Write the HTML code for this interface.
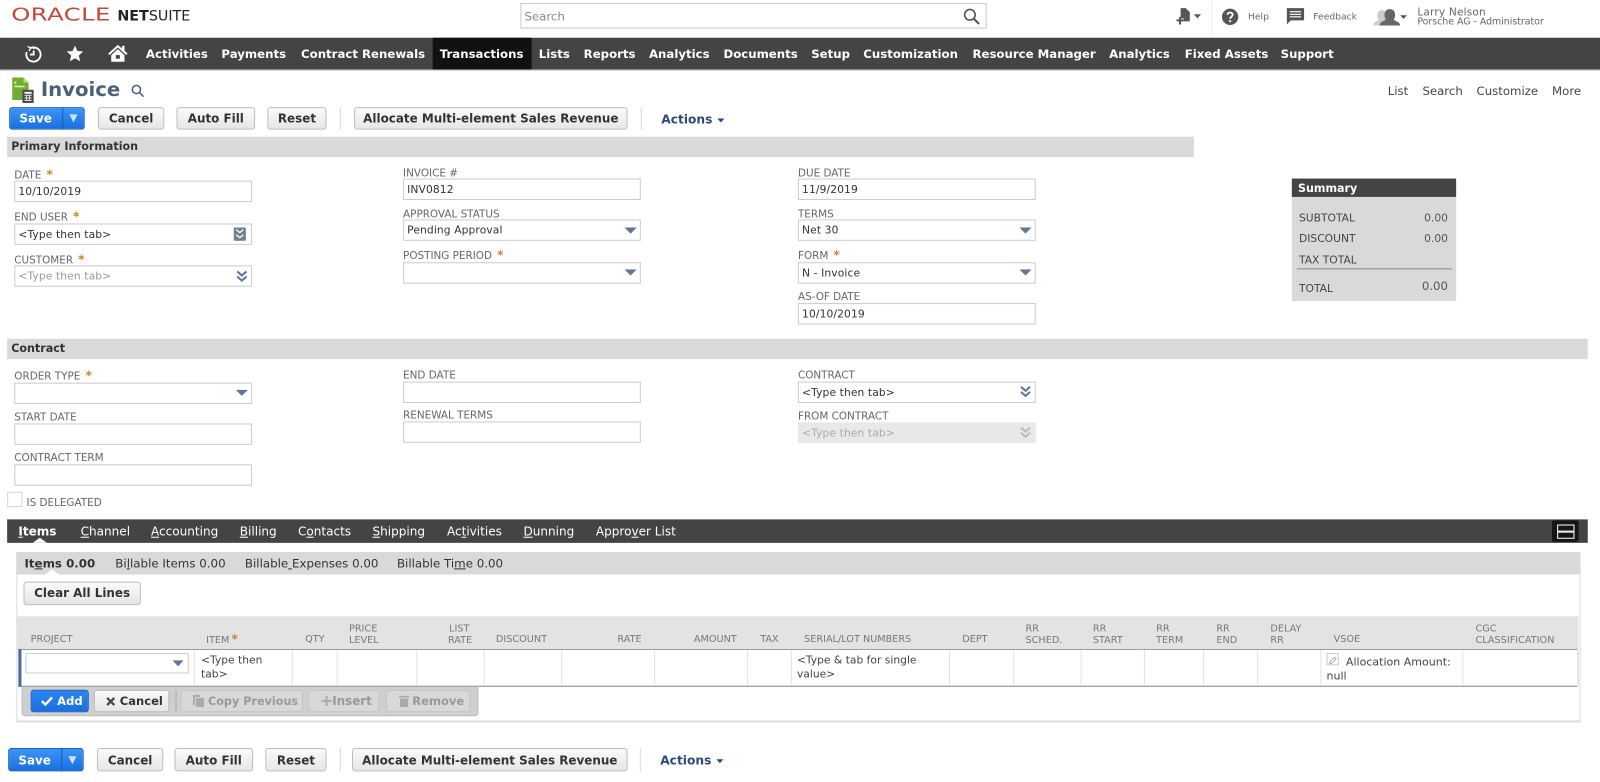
<!DOCTYPE html>
<html><head><meta charset="utf-8"><title>Invoice</title>
<style>
html,body{margin:0;padding:0;width:1600px;height:782px;overflow:hidden;background:#fff}
#w{position:absolute;left:0;top:0;width:1568px;height:766px;transform:scale(1.020408);transform-origin:0 0;font-family:"DejaVu Sans",sans-serif;font-size:10.5px;color:#333}
#w div,#w span.t,#w svg{position:absolute}
.t{white-space:nowrap;line-height:14px}
.lb{color:#666;font-size:10.2px;white-space:nowrap;line-height:14px;position:absolute}
.lb i{color:#c08a1e;font-style:normal;font-size:12px;font-weight:bold;margin-left:5px}
.in{border:1px solid #ccc;box-sizing:border-box;background:#fff;height:21px;width:233px;line-height:21px;padding-left:3px;font-size:10.5px;color:#333;letter-spacing:.1px}
.n{color:#fff;font-weight:bold;font-size:11.5px;top:46px}
.b{box-sizing:border-box;border:1px solid #bdbdbd;border-radius:3px;background:linear-gradient(#fafafa,#e6e6e6);text-align:center;font-weight:bold;font-size:11.7px;color:#333;white-space:nowrap}
.bar{background:#d9d9d9;color:#333;font-weight:bold;font-size:10.9px;line-height:20px;padding-left:4px;box-sizing:border-box;height:20px}
.tab{color:#fff;font-size:11.8px;top:514px}
.tab u{text-decoration-thickness:1px}
.st{font-size:11.6px;color:#333;top:545px}
.h{color:#777;font-size:9.5px;line-height:11px;white-space:nowrap}
.sep{width:1px;background:#e2e2e2;top:637px;height:35px}
.dis{color:#999;border-color:#c4c4c4;background:#e4e4e4}
.s{color:#444;font-size:10.5px;line-height:14px;white-space:nowrap}
</style></head><body><div id="w">

<!-- header -->
<span class="t" style="left:11px;top:6px;font-size:17px;line-height:18px;color:#c74634;letter-spacing:.3px;transform-origin:0 0;transform:scaleX(1.4)">ORACLE</span>
<span class="t" style="left:115px;top:8px;font-size:14px;line-height:17px;color:#222"><b>NET</b>SUITE</span>
<div style="left:510px;top:3px;width:457px;height:25px;border:1px solid #c9c9c9;box-sizing:border-box"></div>
<span class="t" style="left:514px;top:9px;font-size:11.5px;color:#888">Search</span>
<svg style="left:943px;top:7px" width="18" height="18" viewBox="0 0 18 18" fill="none" stroke="#555" stroke-width="1.6"><circle cx="7.5" cy="7.5" r="5.2"/><path d="M11.5 11.5l5 5" stroke-width="2"/></svg>

<svg style="left:1152px;top:7px" width="26" height="18" viewBox="0 0 26 18" fill="#555"><path d="M5 1h5l4 4v9H8v-3H5z"/><path d="M1 12h2.500V9.500h2V12H8v2H5.500v3h-2v-3H1z"/><path d="M18 7h7l-3.500 4z"/></svg>
<div style="left:1187px;top:0;width:1px;height:34px;background:#eee"></div>
<svg style="left:1197px;top:8px" width="17" height="17" viewBox="0 0 17 17"><circle cx="8.500" cy="8.500" r="8" fill="#555"/><path d="M6 6.500c0-3 5-3 5 0 0 2-2.500 2-2.500 4" fill="none" stroke="#fff" stroke-width="1.800"/><rect x="7.600" y="11.800" width="1.900" height="1.900" fill="#fff"/></svg>
<span class="t" style="left:1223px;top:10px;font-size:9px;color:#666">Help</span>
<svg style="left:1261px;top:7px" width="18" height="18" viewBox="0 0 18 18"><path d="M0 1h17v12H4l-4 4z" fill="#555"/><path d="M3 4.500h11M3 7h11M3 9.500h11" stroke="#fff" stroke-width="1.100"/></svg>
<span class="t" style="left:1287px;top:10px;font-size:9px;color:#666">Feedback</span>
<svg style="left:1345px;top:7px" width="34" height="20" viewBox="0 0 34 20"><path d="M1 18c0-4 4-4 5-6-2-2-2-9 3-9 2 0 3 1 4 2v13z" fill="#ccc"/><path d="M7 18c0-4 5-4 6-6-2-3-2-10 4-10s6 7 4 10c1 2 6 2 6 6z" fill="#666"/><path d="M28 8h7l-3.500 3.500z" fill="#555" transform="translate(-1 0)"/></svg>
<span class="t" style="left:1389px;top:5px;font-size:10.300px;color:#666;letter-spacing:.2px">Larry Nelson</span>
<span class="t" style="left:1389px;top:15px;font-size:9.200px;color:#666">Porsche AG - Administrator</span>

<!-- nav -->
<div style="left:0;top:37px;width:1568px;height:31px;background:#444;border-bottom:1px solid #bbb;box-sizing:content-box"></div>
<div style="left:424px;top:37px;width:97px;height:31px;background:#111"></div>
<svg style="left:24px;top:44px" width="18" height="18" viewBox="0 0 18 18" fill="none" stroke="#fff" stroke-width="1.800"><path d="M5.500 3.200A7 7 0 1 1 2.200 7"/><path d="M9 2v2M9 5.500V9.500H5.500"/><path d="M3 1.500l3 1.500-1.500 3" stroke-width="1.300"/></svg>
<svg style="left:65px;top:44px" width="17" height="17" viewBox="0 0 24 24" fill="#fff"><path d="M12 1l3.300 7.400 8.100.8-6.100 5.400 1.800 8L12 18.400 4.900 22.600l1.800-8L.6 9.200l8.100-.8z"/></svg>
<svg style="left:106px;top:43px" width="19" height="18" viewBox="0 0 19 18"><path d="M9.500 1L0 9.500l1.300 1.400 8.200-7.300 8.200 7.300L19 9.500l-3-2.700V2h-2.500v2.500z" fill="#fff"/><path d="M3 11l6.500-5.800L16 11v6.500H3z" fill="#fff"/><rect x="7.500" y="11" width="4" height="3.500" fill="#444"/></svg>
<span class="t n" style="left:143px">Activities</span>
<span class="t n" style="left:217px">Payments</span>
<span class="t n" style="left:295px">Contract Renewals</span>
<span class="t n" style="left:431px">Transactions</span>
<span class="t n" style="left:528px">Lists</span>
<span class="t n" style="left:572px">Reports</span>
<span class="t n" style="left:636px">Analytics</span>
<span class="t n" style="left:709px">Documents</span>
<span class="t n" style="left:795px">Setup</span>
<span class="t n" style="left:846px">Customization</span>
<span class="t n" style="left:953px">Resource Manager</span>
<span class="t n" style="left:1087px">Analytics</span>
<span class="t n" style="left:1161px">Fixed Assets</span>
<span class="t n" style="left:1255px">Support</span>

<!-- title -->
<svg style="left:11px;top:75px" width="24" height="26" viewBox="0 0 24 26"><path d="M1 1h11l5 5v17H1z" fill="#6fae2e"/><path d="M12 1l5 5h-5z" fill="#b7d98a"/><rect x="3" y="5" width="2" height="2" fill="#dff0c5"/><rect x="3" y="9" width="10" height="1.500" fill="#dff0c5"/><rect x="11" y="13" width="11" height="13" fill="#4a4a4a"/><rect x="13" y="15" width="7" height="2" fill="#eee"/><path d="M13 18.500h7M13 21h7M13 23.500h7M15 18v6M18 18v6" stroke="#ddd" stroke-width="1"/></svg>
<span class="t" style="left:40px;top:77px;font-size:19.300px;line-height:22px;font-weight:bold;color:#4d5f79">Invoice</span>
<svg style="left:128px;top:82px" width="14" height="14" viewBox="0 0 14 14" fill="none" stroke="#41608c" stroke-width="1.500"><circle cx="5.700" cy="5.700" r="4"/><path d="M8.700 8.700l4 4"/></svg>
<span class="t" style="left:1360px;top:82px;font-size:11.500px;color:#444">List</span>
<span class="t" style="left:1394px;top:82px;font-size:11.500px;color:#444">Search</span>
<span class="t" style="left:1447px;top:82px;font-size:11.500px;color:#444">Customize</span>
<span class="t" style="left:1521px;top:82px;font-size:11.500px;color:#444">More</span>

<!-- top buttons -->
<div style="left:9px;top:105px;width:74px;height:22px;border-radius:3px;background:linear-gradient(#3b95f5,#1a6fe0);border:1px solid #1a62c4;box-sizing:border-box"></div>
<div style="left:61px;top:105px;width:1px;height:22px;background:#1b5cb0"></div>
<span class="t" style="left:19px;top:109px;color:#fff;font-weight:bold;font-size:11.700px">Save</span>
<svg style="left:68px;top:112px" width="8" height="8"><path d="M0 0h8L4 8z" fill="#cfe3fb"/></svg>
<div class="b" style="left:96px;top:105px;width:65px;height:22px;line-height:20px">Cancel</div>
<div class="b" style="left:173px;top:105px;width:77px;height:22px;line-height:20px">Auto Fill</div>
<div class="b" style="left:262px;top:105px;width:58px;height:22px;line-height:20px">Reset</div>
<div style="left:333px;top:105px;width:1px;height:22px;background:#d8d8d8"></div>
<div class="b" style="left:347px;top:105px;width:268px;height:22px;line-height:20px">Allocate Multi-element Sales Revenue</div>
<div style="left:628px;top:105px;width:1px;height:22px;background:#d8d8d8"></div>
<span class="t" style="left:648px;top:110px;font-weight:bold;font-size:12px;color:#2b4a7d">Actions</span>
<svg style="left:703px;top:116px" width="7" height="5"><path d="M0 0h7L3.500 4z" fill="#2b4a7d"/></svg>

<!-- primary -->
<div class="bar" style="left:7px;top:134px;width:1163px">Primary Information</div>

<span class="lb" style="left:14px;top:164px">DATE<i>*</i></span>
<div class="in" style="left:14px;top:177px">10/10/2019</div>
<span class="lb" style="left:14px;top:205px">END USER<i>*</i></span>
<div class="in" style="left:14px;top:219px">&lt;Type then tab&gt;</div>
<svg style="left:229px;top:223px" width="12" height="13"><rect width="12" height="13" rx="1" fill="#6d7f99"/><path d="M2.500 2l3.500 3 3.500-3M2.500 7l3.500 3 3.500-3" stroke="#fff" stroke-width="1.300" fill="none"/></svg>
<span class="lb" style="left:14px;top:247px">CUSTOMER<i>*</i></span>
<div class="in" style="left:14px;top:260px;color:#999">&lt;Type then tab&gt;</div>

<span class="lb" style="left:395px;top:164px">INVOICE #</span>
<div class="in" style="left:395px;top:175px">INV0812</div>
<span class="lb" style="left:395px;top:204px">APPROVAL STATUS</span>
<div class="in" style="left:395px;top:215px">Pending Approval</div>
<span class="lb" style="left:395px;top:243px">POSTING PERIOD<i>*</i></span>
<div class="in" style="left:395px;top:257px"></div>

<span class="lb" style="left:782px;top:164px">DUE DATE</span>
<div class="in" style="left:782px;top:175px">11/9/2019</div>
<span class="lb" style="left:782px;top:204px">TERMS</span>
<div class="in" style="left:782px;top:215px">Net 30</div>
<span class="lb" style="left:782px;top:243px">FORM<i>*</i></span>
<div class="in" style="left:782px;top:257px">N - Invoice</div>
<span class="lb" style="left:782px;top:285px">AS-OF DATE</span>
<div class="in" style="left:782px;top:297px">10/10/2019</div>

<!-- summary -->
<div style="left:1266px;top:175px;width:161px;height:120px;background:#d9d9d9"></div>
<div style="left:1266px;top:175px;width:161px;height:18px;background:#444;color:#fff;font-weight:bold;font-size:10.900px;line-height:19px;text-indent:6px">Summary</div>
<span class="t s" style="left:1273px;top:207px">SUBTOTAL</span><span class="t s" style="right:149px;top:207px;font-size:10.500px;color:#555">0.00</span>
<span class="t s" style="left:1273px;top:227px">DISCOUNT</span><span class="t s" style="right:149px;top:227px;font-size:10.500px;color:#555">0.00</span>
<span class="t s" style="left:1273px;top:248px">TAX TOTAL</span>
<div style="left:1271px;top:263px;width:152px;height:1px;background:#888"></div>
<span class="t s" style="left:1273px;top:276px">TOTAL</span><span class="t s" style="right:149px;top:273px;font-size:11.500px;color:#555">0.00</span>

<!-- contract -->
<div class="bar" style="left:7px;top:332px;width:1549px">Contract</div>
<span class="lb" style="left:14px;top:361px">ORDER TYPE<i>*</i></span>
<div class="in" style="left:14px;top:375px"></div>
<span class="lb" style="left:14px;top:403px">START DATE</span>
<div class="in" style="left:14px;top:415px"></div>
<span class="lb" style="left:14px;top:443px">CONTRACT TERM</span>
<div class="in" style="left:14px;top:455px"></div>
<span class="lb" style="left:395px;top:362px">END DATE</span>
<div class="in" style="left:395px;top:374px"></div>
<span class="lb" style="left:395px;top:401px">RENEWAL TERMS</span>
<div class="in" style="left:395px;top:413px"></div>
<span class="lb" style="left:782px;top:362px">CONTRACT</span>
<div class="in" style="left:782px;top:374px">&lt;Type then tab&gt;</div>
<span class="lb" style="left:782px;top:402px">FROM CONTRACT</span>
<div class="in" style="left:782px;top:414px;height:20px;line-height:20px;background:#e8e8e8;border-color:#e8e8e8;color:#aaa">&lt;Type then tab&gt;</div>
<div style="left:7px;top:482px;width:15px;height:15px;border:1px solid #d5d5d5;box-sizing:border-box"></div>
<span class="lb" style="left:26px;top:487px">IS DELEGATED</span>

<!-- dropdown arrows -->
<svg style="left:612px;top:223px" width="12" height="7"><path d="M0 0h12L6 6z" fill="#5f7698"/></svg>
<svg style="left:612px;top:264px" width="12" height="7"><path d="M0 0h12L6 6z" fill="#5f7698"/></svg>
<svg style="left:999px;top:223px" width="12" height="7"><path d="M0 0h12L6 6z" fill="#5f7698"/></svg>
<svg style="left:999px;top:264px" width="12" height="7"><path d="M0 0h12L6 6z" fill="#5f7698"/></svg>
<svg style="left:231px;top:382px" width="12" height="7"><path d="M0 0h12L6 6z" fill="#5f7698"/></svg>
<svg style="left:231px;top:265px" width="12" height="12" fill="none" stroke="#5f7698" stroke-width="2"><path d="M1.500 1l4.500 4 4.500-4M1.500 6l4.500 4 4.500-4"/></svg>
<svg style="left:999px;top:378px" width="12" height="12" fill="none" stroke="#5f7698" stroke-width="2"><path d="M1.500 1l4.500 4 4.500-4M1.500 6l4.500 4 4.500-4"/></svg>
<svg style="left:999px;top:418px" width="12" height="12" fill="none" stroke="#bbb" stroke-width="2"><path d="M1.500 1l4.500 4 4.500-4M1.500 6l4.500 4 4.500-4"/></svg>

<!-- tabs -->
<div style="left:7px;top:509px;width:1549px;height:23px;background:#444"></div>
<span class="t tab" style="left:18px;font-weight:bold"><u>I</u>tems</span>
<svg style="left:32px;top:527px" width="14" height="5"><path d="M0 5L7 0l7 5z" fill="#fff"/></svg>
<span class="t tab" style="left:79px"><u>C</u>hannel</span>
<span class="t tab" style="left:148px"><u>A</u>ccounting</span>
<span class="t tab" style="left:235px"><u>B</u>illing</span>
<span class="t tab" style="left:292px">C<u>o</u>ntacts</span>
<span class="t tab" style="left:365px"><u>S</u>hipping</span>
<span class="t tab" style="left:438px">Ac<u>t</u>ivities</span>
<span class="t tab" style="left:513px"><u>D</u>unning</span>
<span class="t tab" style="left:584px">Appro<u>v</u>er List</span>
<div style="left:1521px;top:510px;width:26px;height:21px;background:#151515;border-radius:2px"></div>
<div style="left:1526px;top:514px;width:15px;height:5px;border:1px solid #fff"></div>
<div style="left:1526px;top:521px;width:15px;height:5px;border:1px solid #fff"></div>

<!-- panel -->
<div style="left:16px;top:541px;width:1533px;height:167px;border:1px solid #ddd;border-top:0;box-sizing:border-box;border-bottom-width:2px"></div>
<div style="left:16px;top:541px;width:1532px;height:22px;background:#d9d9d9"></div>
<span class="t st" style="left:24px;font-weight:bold">It<u>e</u>ms 0.00</span>
<span class="t st" style="left:113px">Bi<u>l</u>lable Items 0.00</span>
<span class="t st" style="left:240px">Billable<u>&nbsp;</u>Expenses 0.00</span>
<span class="t st" style="left:389px">Billable Ti<u>m</u>e 0.00</span>
<svg style="left:44px;top:558px" width="14" height="5"><path d="M0 5L7 0l7 5z" fill="#fff"/></svg>
<div class="b" style="left:23px;top:570px;width:115px;height:23px;line-height:21px">Clear All Lines</div>

<!-- table head -->
<div style="left:17px;top:604px;width:1530px;height:32px;background:#e3e3e3"></div>
<div style="left:18px;top:636px;width:1528px;height:1px;background:#9aa0a8"></div>
<div style="left:18px;top:672px;width:1528px;height:1px;background:#7f858d"></div>
<div style="left:18px;top:636px;width:3px;height:37px;background:#4d6a94"></div>
<span class="t h" style="left:30px;top:621px;line-height:11px">PROJECT</span>
<span class="t h" style="left:202px;top:621px;line-height:11px">ITEM<span style="color:#c08a1e;font-size:12px;font-weight:bold;margin-left:2px">*</span></span>
<span class="t h" style="left:299px;top:621px;line-height:11px">QTY</span>
<span class="t h" style="left:342px;top:611px;line-height:11px">PRICE<br>LEVEL</span>
<span class="t h" style="left:439px;top:611px;line-height:11px;text-align:right;width:21px">LIST<br>RATE</span>
<span class="t h" style="left:486px;top:621px;line-height:11px">DISCOUNT</span>
<span class="t h" style="left:605px;top:621px;line-height:11px">RATE</span>
<span class="t h" style="left:680px;top:621px;line-height:11px">AMOUNT</span>
<span class="t h" style="left:745px;top:621px;line-height:11px">TAX</span>
<span class="t h" style="left:788px;top:621px;line-height:11px">SERIAL/LOT NUMBERS</span>
<span class="t h" style="left:943px;top:621px;line-height:11px">DEPT</span>
<span class="t h" style="left:1005px;top:611px;line-height:11px">RR<br>SCHED.</span>
<span class="t h" style="left:1071px;top:611px;line-height:11px">RR<br>START</span>
<span class="t h" style="left:1133px;top:611px;line-height:11px">RR<br>TERM</span>
<span class="t h" style="left:1192px;top:611px;line-height:11px">RR<br>END</span>
<span class="t h" style="left:1245px;top:611px;line-height:11px">DELAY<br>RR</span>
<span class="t h" style="left:1307px;top:621px;line-height:11px">VSOE</span>
<span class="t h" style="left:1446px;top:611px;line-height:11px">CGC<br>CLASSIFICATION</span>

<!-- row -->
<div class="sep" style="left:190px"></div><div class="sep" style="left:285.500px"></div><div class="sep" style="left:329.500px"></div><div class="sep" style="left:407.500px"></div><div class="sep" style="left:473.500px"></div><div class="sep" style="left:549.500px"></div><div class="sep" style="left:640.500px"></div><div class="sep" style="left:731.500px"></div><div class="sep" style="left:775px"></div><div class="sep" style="left:929.500px"></div><div class="sep" style="left:992.500px"></div><div class="sep" style="left:1058.500px"></div><div class="sep" style="left:1120.500px"></div><div class="sep" style="left:1178.500px"></div><div class="sep" style="left:1231.500px"></div><div class="sep" style="left:1294px"></div><div class="sep" style="left:1433px"></div><div class="sep" style="left:1546px;background:#ccc"></div>
<div class="in" style="left:25px;top:640px;width:160px;height:20px"></div>
<svg style="left:169px;top:647px" width="11" height="6"><path d="M0 0h11L5.500 6z" fill="#5f7698"/></svg>
<span class="t" style="left:197px;top:640px;font-size:10.500px;line-height:14px;color:#444">&lt;Type then<br>tab&gt;</span>
<span class="t" style="left:781px;top:640px;font-size:10.500px;line-height:14px;color:#444">&lt;Type &amp; tab for single<br>value&gt;</span>
<div style="left:1300px;top:640px;width:12px;height:12px;border:1px solid #ccc;box-sizing:border-box"></div>
<svg style="left:1302px;top:642px" width="9" height="9" fill="none" stroke="#999"><path d="M1 7l5-5 1.500 1.500-5 5H1z" stroke-width=".8"/></svg>
<span class="t" style="left:1319px;top:642px;font-size:10.800px;line-height:14px;color:#444">Allocation Amount:</span>
<span class="t" style="left:1300px;top:656px;font-size:10.800px;line-height:14px;color:#444">null</span>

<!-- action row -->
<div style="left:21px;top:673px;width:448px;height:29px;background:#cfcfcf;border-radius:0 0 4px 4px;border:1px solid #b8bcc4;border-top:0;box-sizing:border-box"></div>
<div style="left:30px;top:676px;width:57px;height:22px;background:linear-gradient(#2b86ee,#1a6fe0);border:1px solid #1a62c4;border-radius:3px;box-sizing:border-box;color:#fff;font-weight:bold;font-size:11.300px;line-height:21px;text-indent:25px">Add</div>
<svg style="left:40px;top:682px" width="12" height="10" fill="none" stroke="#fff" stroke-width="2.300"><path d="M1 5l3.500 3.500L11 1.500"/></svg>
<div class="b" style="left:92px;top:676px;width:74px;height:22px;line-height:21px;text-indent:19px;font-size:11.300px">Cancel</div>
<svg style="left:104px;top:683px" width="9" height="9" stroke="#444" stroke-width="2.200"><path d="M1 1l7 7M8 1l-7 7"/></svg>
<div style="left:172px;top:676px;width:1px;height:22px;background:#aaa"></div>
<div class="b dis" style="left:177px;top:676px;width:120px;height:22px;line-height:21px;text-indent:22px;font-size:11px;background:#d8d8d8">Copy Previous</div>
<svg style="left:189px;top:681px" width="12" height="12"><path d="M0 0h7v2H2v8H0z" fill="#aaa"/><rect x="3" y="3" width="8" height="9" fill="#aaa"/></svg>
<div class="b dis" style="left:302px;top:676px;width:70px;height:22px;line-height:21px;text-indent:16px;background:#d8d8d8">Insert</div>
<svg style="left:315px;top:682px" width="10" height="10"><path d="M4 0h2v4h4v2H6v4H4V6H0V4h4z" fill="#aaa"/></svg>
<div class="b dis" style="left:378px;top:676px;width:83px;height:22px;line-height:21px;text-indent:20px;font-size:11.300px;background:#d8d8d8">Remove</div>
<svg style="left:391px;top:681px" width="10" height="12"><path d="M0 1h10v1.500H0zM1 3.500h8V12H1z" fill="#aaa"/></svg>

<!-- bottom buttons -->
<div style="left:8px;top:733px;width:74px;height:23px;border-radius:3px;background:linear-gradient(#3b95f5,#1a6fe0);border:1px solid #1a62c4;box-sizing:border-box"></div>
<div style="left:60px;top:733px;width:1px;height:23px;background:#1b5cb0"></div>
<span class="t" style="left:18px;top:738px;color:#fff;font-weight:bold;font-size:11.700px">Save</span>
<svg style="left:67px;top:741px" width="8" height="8"><path d="M0 0h8L4 8z" fill="#cfe3fb"/></svg>
<div class="b" style="left:95px;top:733px;width:65px;height:23px;line-height:22px">Cancel</div>
<div class="b" style="left:171px;top:733px;width:77px;height:23px;line-height:22px">Auto Fill</div>
<div class="b" style="left:260px;top:733px;width:60px;height:23px;line-height:22px">Reset</div>
<div style="left:333px;top:733px;width:1px;height:23px;background:#d8d8d8"></div>
<div class="b" style="left:345px;top:733px;width:270px;height:23px;line-height:22px">Allocate Multi-element Sales Revenue</div>
<div style="left:627px;top:733px;width:1px;height:23px;background:#d8d8d8"></div>
<span class="t" style="left:647px;top:738px;font-weight:bold;font-size:12px;color:#2b4a7d">Actions</span>
<svg style="left:702px;top:744px" width="7" height="5"><path d="M0 0h7L3.500 4z" fill="#2b4a7d"/></svg>
</div></body></html>
